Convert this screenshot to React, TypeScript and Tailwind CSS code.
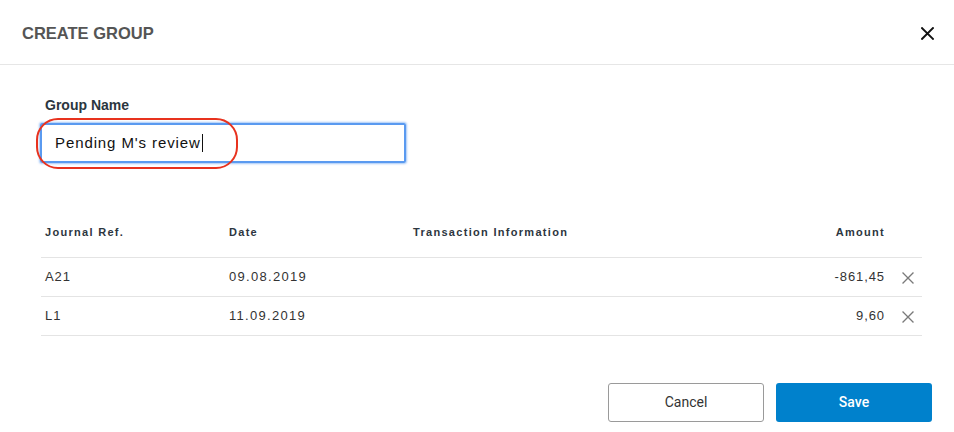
import React from "react";

interface Row {
  ref: string;
  date: string;
  info: string;
  amount: string;
}

const rows: Row[] = [
  {ref: "A21", date: "09.08.2019", info: "", amount: "-861,45"},
  {ref: "L1", date: "11.09.2019", info: "", amount: "9,60"},
];

const Cross = ({size, stroke, color}: {size: number; stroke: number; color: string}) => (
  <svg width={size} height={size} viewBox="0 0 12 12" fill="none">
    <path d="M1 1L11 11M11 1L1 11" stroke={color} strokeWidth={stroke} strokeLinecap="square" />
  </svg>
);

export default function App() {
  return (
    <div className="h-[432px] w-full bg-white font-['Liberation_Sans',Arial,sans-serif]">
      <div className="flex h-[65px] items-center justify-between border-b border-[#e6e6e6] pl-[22px] pr-[20px] pt-[3px]">
        <h1 className="text-[16.5px] font-bold text-[#555555]">CREATE GROUP</h1>
        <button type="button" className="flex h-[14px] w-[14px] items-center justify-center">
          <Cross size={13} stroke={1.8} color="#111111" />
        </button>
      </div>

      <div className="pl-[41px] pr-[32px] pt-[32px]">
        <label className="block pl-[4px] text-[14px] font-bold leading-[16px] text-[#2b3640]">Group Name</label>
        <div className="relative mt-[10px] w-[365px]">
          <div className="-ml-[1px] flex h-[40px] items-center rounded-[2px] border-2 border-[#5a9af0] pl-[13px] shadow-[0_0_2px_1px_rgba(90,154,240,0.55)]">
            <span className="text-[15px] tracking-[0.9px] text-[#111111]">Pending M's review</span>
            <span className="ml-[1px] h-[18px] w-[1px] bg-[#111111]" />
          </div>
          <div className="absolute -left-[5px] -top-[5px] h-[51px] w-[202px] rounded-[22px] border-2 border-[#e8321e]" />
        </div>

        <div className="mt-[45px]">
          <div className="flex h-[50px] items-center border-b border-[#e4e4e4] text-[11px] font-bold tracking-[1.3px] text-[#2d3640]">
            <div className="w-[184px] pl-[4px]">Journal Ref.</div>
            <div className="w-[184px] pl-[4px]">Date</div>
            <div className="flex-1 pl-[4px]">Transaction Information</div>
            <div className="w-[200px] text-right">Amount</div>
            <div className="w-[37px]" />
          </div>
          {rows.map((row) => (
            <div
              key={row.ref}
              className="flex h-[39px] items-center border-b border-[#e4e4e4] pb-[1px] text-[13px] tracking-[0.9px] text-[#333333]"
            >
              <div className="w-[184px] pl-[4px]">{row.ref}</div>
              <div className="w-[184px] pl-[4px] tracking-[1.3px]">{row.date}</div>
              <div className="flex-1 pl-[4px]">{row.info}</div>
              <div className="w-[200px] text-right">{row.amount}</div>
              <div className="flex w-[37px] items-center pl-[17px] pt-[2px]">
                <Cross size={12} stroke={1.3} color="#7a7a7a" />
              </div>
            </div>
          ))}
        </div>
      </div>

      <div className="mt-[47px] flex justify-end gap-[12px] pr-[22px] font-['Roboto',sans-serif]">
        <button
          type="button"
          className="h-[39px] w-[156px] rounded-[3px] border border-[#9a9a9a] bg-white text-[14px] text-[#333333]"
        >
          Cancel
        </button>
        <button
          type="button"
          className="h-[39px] w-[156px] rounded-[3px] bg-[#0081cc] text-[14px] font-medium text-white"
        >
          Save
        </button>
      </div>
    </div>
  );
}
